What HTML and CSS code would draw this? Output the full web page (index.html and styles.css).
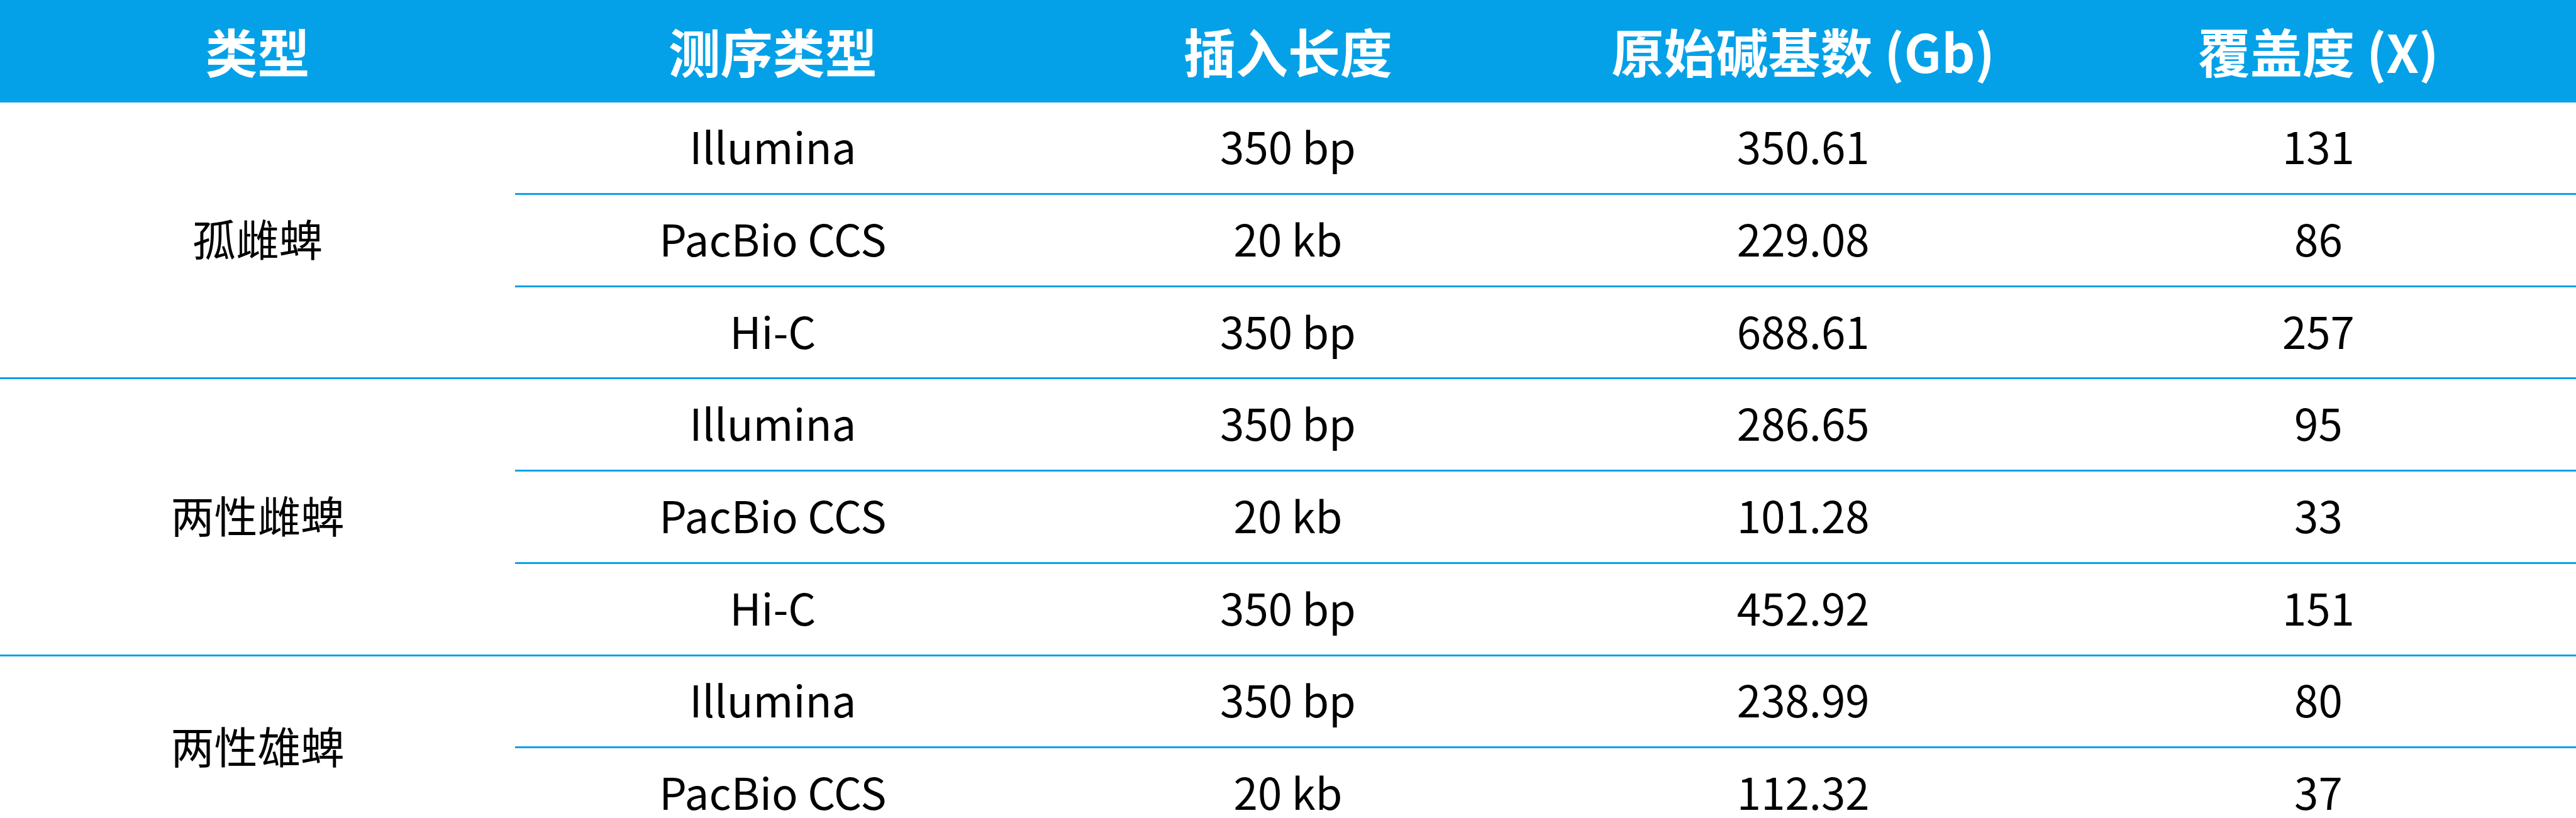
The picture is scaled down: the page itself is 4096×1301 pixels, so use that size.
FILE: index.html
```html
<!DOCTYPE html>
<html lang="zh-CN">
<head>
<meta charset="utf-8">
<title>测序数据统计</title>
<link rel="stylesheet" href="styles.css">
</head>
<body>
<div class="table">
  <div class="head">
    <div class="th">类型</div>
    <div class="th">测序类型</div>
    <div class="th">插入长度</div>
    <div class="th">原始碱基数 (Gb)</div>
    <div class="th">覆盖度 (X)</div>
  </div>

  <div class="group">
    <div class="label">孤雌蜱</div>
    <div class="rows">
      <div class="row"><div class="cell">Illumina</div><div class="cell">350 bp</div><div class="cell">350.61</div><div class="cell">131</div></div>
      <div class="row"><div class="cell">PacBio CCS</div><div class="cell">20 kb</div><div class="cell">229.08</div><div class="cell">86</div></div>
      <div class="row"><div class="cell">Hi-C</div><div class="cell">350 bp</div><div class="cell">688.61</div><div class="cell">257</div></div>
    </div>
  </div>

  <div class="group">
    <div class="label">两性雌蜱</div>
    <div class="rows">
      <div class="row"><div class="cell">Illumina</div><div class="cell">350 bp</div><div class="cell">286.65</div><div class="cell">95</div></div>
      <div class="row"><div class="cell">PacBio CCS</div><div class="cell">20 kb</div><div class="cell">101.28</div><div class="cell">33</div></div>
      <div class="row"><div class="cell">Hi-C</div><div class="cell">350 bp</div><div class="cell">452.92</div><div class="cell">151</div></div>
    </div>
  </div>

  <div class="group">
    <div class="label">两性雄蜱</div>
    <div class="rows">
      <div class="row"><div class="cell">Illumina</div><div class="cell">350 bp</div><div class="cell">238.99</div><div class="cell">80</div></div>
      <div class="row"><div class="cell">PacBio CCS</div><div class="cell">20 kb</div><div class="cell">112.32</div><div class="cell">37</div></div>
    </div>
  </div>
</div>
</body>
</html>
```

FILE: styles.css
```css
html, body {
  margin: 0;
  padding: 0;
  overflow: hidden;
  background: #ffffff;
}

.table {
  width: 4096px;
  font-family: "Noto Sans CJK SC", "Noto Sans", sans-serif;
  color: #000000;
}

.head {
  display: grid;
  grid-template-columns: repeat(5, 1fr);
  height: 163.4px;
  background: #04a1e8;
  color: #ffffff;
  font-weight: 700;
  font-size: 83px;
}

.th {
  display: flex;
  align-items: center;
  justify-content: center;
  white-space: nowrap;
  padding-bottom: 4px;
}

.group {
  display: flex;
  border-bottom: 3px solid #0aa0e8;
}

.label {
  width: 20%;
  display: flex;
  align-items: center;
  justify-content: center;
  font-size: 69px;
  padding-bottom: 8px;
  box-sizing: border-box;
}

.rows {
  flex: 1;
}

.row {
  display: grid;
  grid-template-columns: repeat(4, 1fr);
  height: 146.7px;
  box-sizing: border-box;
  border-bottom: 3px solid #0aa0e8;
  font-size: 69px;
}

.row:last-child {
  height: 143.7px;
  border-bottom: 0;
}

.cell {
  display: flex;
  align-items: center;
  justify-content: center;
  white-space: nowrap;
  padding-bottom: 8px;
}
```
